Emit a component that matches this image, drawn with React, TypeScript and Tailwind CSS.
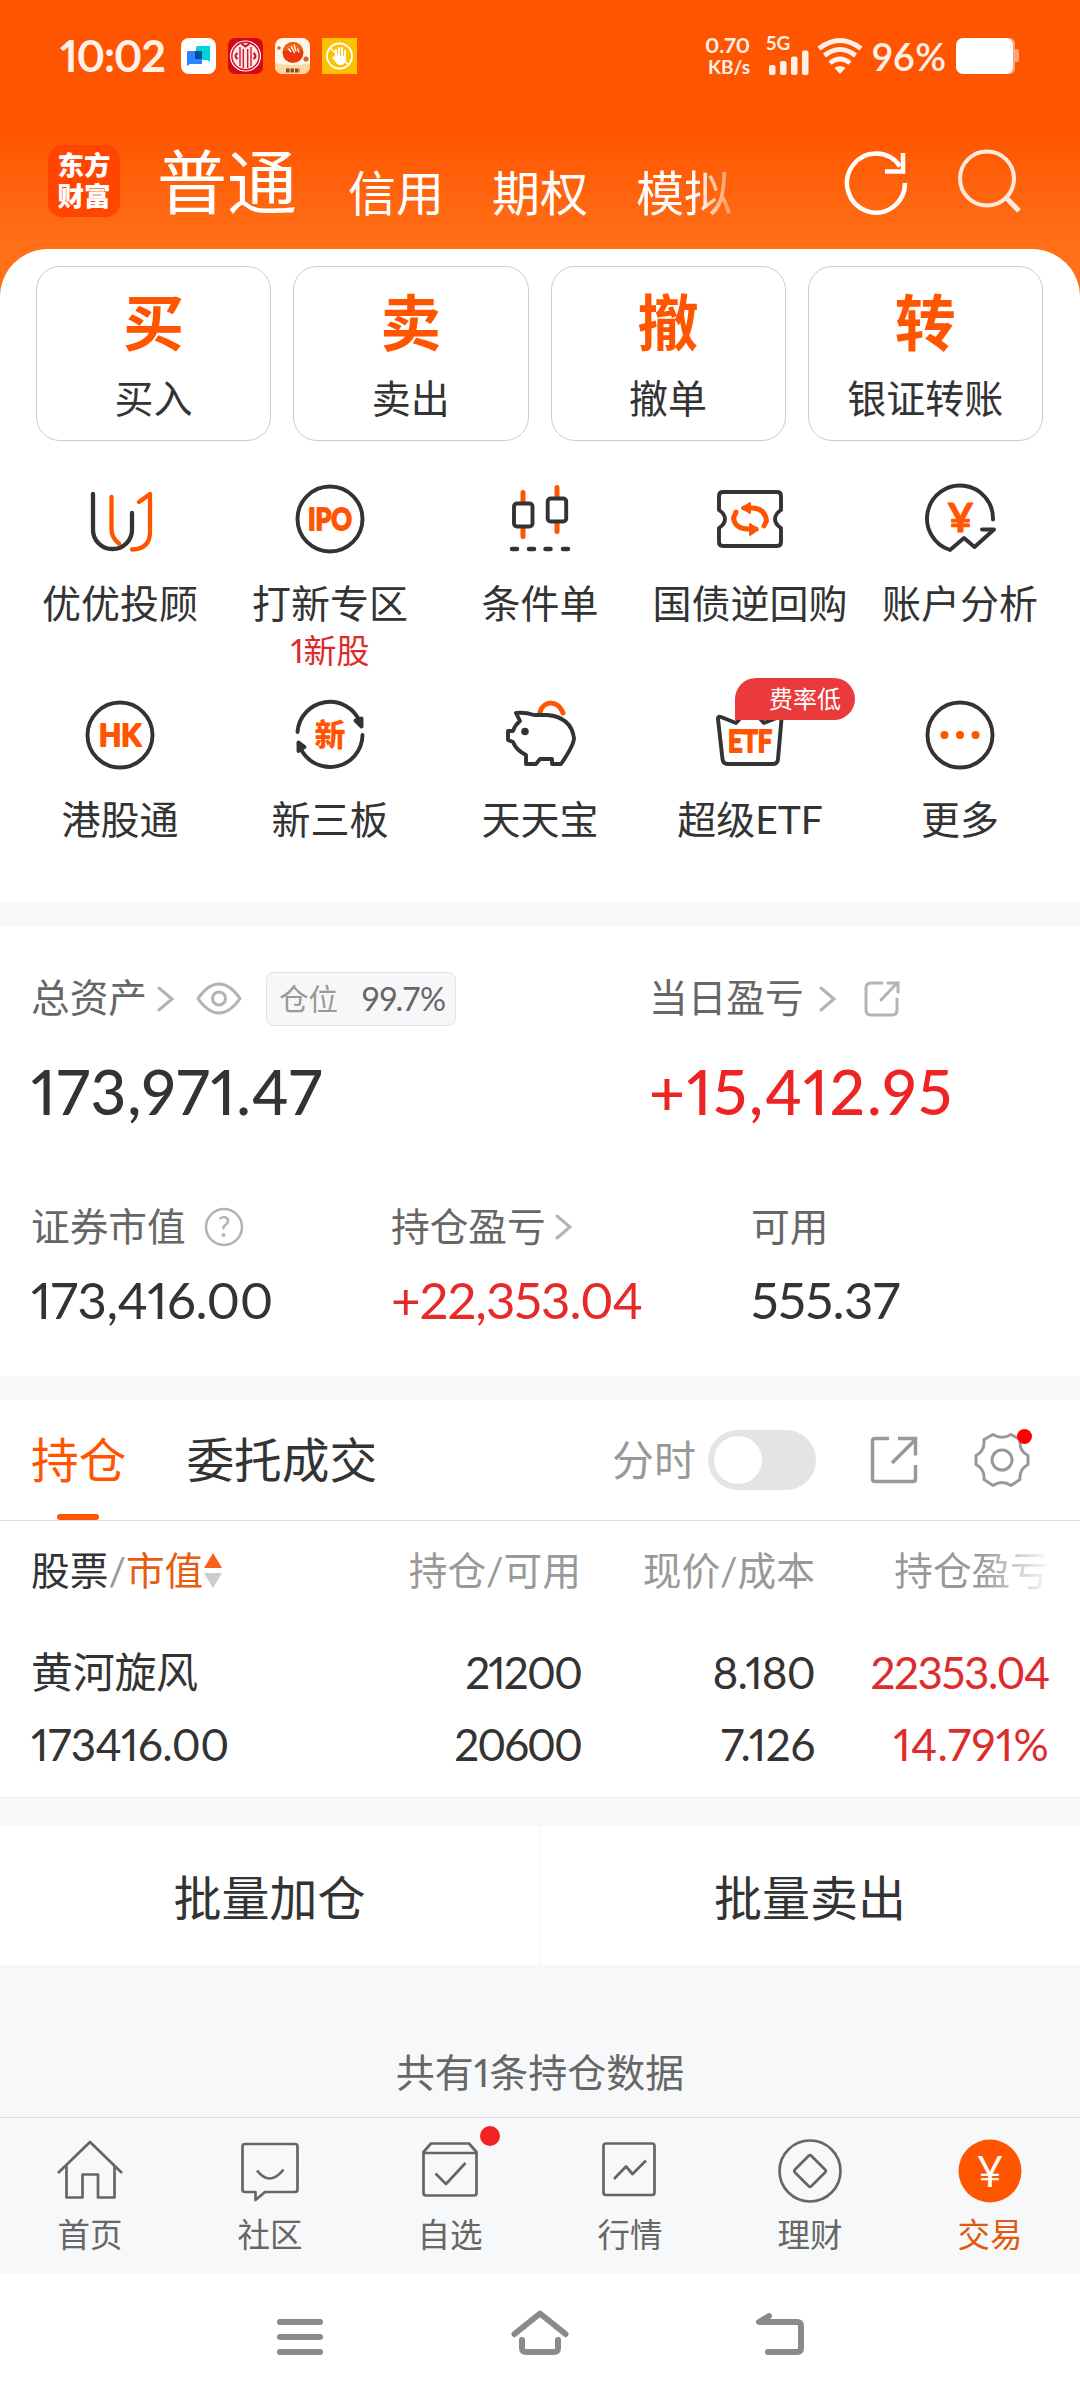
import type { ReactNode } from 'react';

const DARK = '#333333';
const ORANGE = '#ff5500';

function Chevron({ className = '' }: { className?: string }) {
  return (
    <svg width="18" height="28" viewBox="0 0 18 28" fill="none" stroke="#b3b3b3" strokeWidth="3" strokeLinecap="round" className={className}>
      <path d="M2 3 L15 14 L2 25" />
    </svg>
  );
}

function StatusBar() {
  return (
    <div className="flex h-[112px] items-center pl-[60px] pr-[60px] text-[#fff0e8]">
      <span className="w-[121px] text-[43px] leading-[52px] font-bold tracking-[-1.2px]">10:02</span>
      <div className="flex gap-[12px]">
        <svg width="35" height="36" viewBox="0 0 35 36">
          <rect width="35" height="36" rx="8" fill="#fff" />
          <path d="M15 9.5Q15 8 16.5 8H29v16l-2.500-2H15z" fill="#00d4d8" />
          <path d="M6 14Q6 13 7.500 13H21v13H9l-3 2z" fill="#2a86ff" />
          <path d="M14 13h7v8h-7z" fill="#004c99" />
        </svg>
        <svg width="35" height="36" viewBox="0 0 35 36" fill="none" stroke="#fff">
          <rect width="35" height="36" rx="7" fill="#cf0a1c" stroke="none" />
          <circle cx="17.500" cy="18" r="15" strokeWidth="1.200" />
          <circle cx="17.500" cy="18" r="13" fill="#fbe3e6" stroke="none" />
          <path d="M12 9v19M15.300 11v19M19.700 11v19M23 9v19" stroke="#cf0a1c" strokeWidth="1.300" />
          <path d="M13.500 5.500l4 3 4-3" stroke="#cf0a1c" strokeWidth="2" />
          <path d="M9.500 15q-4 3 0 6M25.500 15q4 3 0 6" stroke="#cf0a1c" strokeWidth="2" />
        </svg>
        <svg width="35" height="36" viewBox="0 0 35 36">
          <rect width="35" height="36" rx="8" fill="#fff6ea" />
          <path d="M0 25Q17 29 35 25v3q0 8-8 8H8q-8 0-8-8z" fill="#fbd9a4" />
          <circle cx="18" cy="14.500" r="10.500" fill="#e9380c" />
          <path d="M18 4a10.500 10.500 0 0 1 10 8Q20 12 8 12.500A10.500 10.500 0 0 1 18 4z" fill="#f0650f" />
          <path d="M13.500 10.500l2.500 3.500M16 8l3.500 7M19 6.500l2 7M22.500 10.500l1.500 4" stroke="#fff" strokeWidth="1.300" />
          <circle cx="4" cy="10" r="1.800" fill="#d9622c" />
          <circle cx="31" cy="21" r="2.600" fill="#d9622c" />
          <path d="M11 32.500h14" stroke="#8a4a22" strokeWidth="4" strokeDasharray="3.500 1" />
        </svg>
        <svg width="35" height="36" viewBox="0 0 35 36" fill="none" stroke="#fff" strokeLinecap="round">
          <rect width="35" height="36" fill="#fcc203" stroke="none" />
          <circle cx="17.500" cy="18" r="12.500" strokeWidth="1.800" />
          <path d="M14 19v-7M17 18v-8M20 18v-8M23 20v-7" strokeWidth="2.100" />
          <path d="M12.500 18h11.500v4q-1 5-5.500 5-3.500 0-5-3l-3.500-4.500z" fill="#fff" stroke="none" />
          <path d="M8 10l19 17" strokeWidth="1.500" />
        </svg>
      </div>
      <div className="ml-auto flex items-center">
        <div className="w-[56px] pr-[11px] text-right font-bold whitespace-nowrap">
          <div className="text-[21.500px] leading-[21.500px]">0.70</div>
          <div className="text-[19px] leading-[20px]">KB/s</div>
        </div>
        <div className="mr-[6px] w-[50px]">
          <div className="-mt-[4px] h-[17px] pl-[5px] text-[19px] leading-[19px] font-bold">5G</div>
          <svg width="50" height="25" viewBox="0 0 50 25" fill="#fff0e8">
            <rect x="8" y="15" width="6.500" height="10" rx="2" />
            <rect x="19" y="11" width="6.500" height="14" rx="2" />
            <rect x="30" y="6.500" width="6.500" height="18.500" rx="2" />
            <rect x="41" y="0.500" width="6.500" height="24.500" rx="2" />
          </svg>
        </div>
        <svg width="46" height="38" viewBox="0 0 46 38" fill="none" stroke="#fff0e8" strokeWidth="4.800" className="mr-[9px]">
          <path d="M2 11.500Q23-4.500 44 11.500" />
          <path d="M7.500 18.500Q23 6.500 38.500 18.500" />
          <path d="M13 26Q23 18 33 26" />
          <path d="M17.500 31Q23 27 28.500 31L23 37z" fill="#fff0e8" stroke="none" />
        </svg>
        <span className="w-[84px] text-[38px] leading-[46px] font-semibold tracking-[0.4px]">96%</span>
        <svg width="64" height="38" viewBox="0 0 64 38">
          <path d="M50 1h3q6 0 6 6v5h2q2 0 2 2v9q0 2-2 2h-2v6q0 6-6 6h-3z" fill="#ffa27a" />
          <rect x="0" y="1" width="57" height="36" rx="7" fill="#fff" />
        </svg>
      </div>
    </div>
  );
}

function TitleBar() {
  return (
    <div className="flex h-[137px] items-center pl-[48px] text-white">
      <div className="flex h-[72px] w-[72px] flex-col items-center justify-center rounded-[14px] bg-[#ff4500] text-[26.500px] leading-[31px] font-black">
        <span>东方</span>
        <span>财富</span>
      </div>
      <span className="mt-[2px] ml-[37px] text-[70px] leading-[80px]">普通</span>
      <div className="mt-[24px] ml-[51px] flex gap-[48px] text-[48px] leading-[56px]">
        <span>信用</span>
        <span>期权</span>
        <span className="[mask-image:linear-gradient(to_right,black_62%,rgba(0,0,0,0.4)_95%)]">模拟</span>
      </div>
      <svg width="64" height="68" viewBox="0 0 64 68" fill="none" stroke="#fff" strokeWidth="4.500" className="ml-[112px]">
        <path d="M61 36A29 29.500 0 1 1 56 19.500" />
        <path d="M59 6v18.500H41" />
      </svg>
      <svg width="66" height="68" viewBox="0 0 66 68" fill="none" stroke="#ffe8dc" strokeWidth="4" className="ml-[50px]">
        <circle cx="29" cy="31.500" r="27" />
        <path d="M48 50.500L61 64" strokeWidth="5" />
      </svg>
    </div>
  );
}

const trades = [
  { mark: '买', label: '买入' },
  { mark: '卖', label: '卖出' },
  { mark: '撤', label: '撤单' },
  { mark: '转', label: '银证转账' },
];

function MenuSvg({ children }: { children: ReactNode }) {
  return (
    <svg width="72" height="72" viewBox="0 0 72 72" fill="none" stroke={DARK} strokeWidth="3.900" strokeLinecap="round" strokeLinejoin="round">
      {children}
    </svg>
  );
}

const shortcuts = [
  {
    label: '优优投顾',
    icon: (
      <MenuSvg>
        <path d="M9 11v36a19.500 19 0 0 0 39 0V30" strokeWidth="4.300" />
        <path d="M27.500 14v32q0 9 7.500 14.500M55 19l11-8v38q0 17-18 17.500" stroke={ORANGE} strokeWidth="4.300" />
      </MenuSvg>
    ),
  },
  {
    label: '打新专区',
    note: '1新股',
    icon: (
      <MenuSvg>
        <circle cx="36" cy="36" r="32.500" />
        <text x="36" y="47" textAnchor="middle" fontSize="31" fontWeight="700" fill={ORANGE} stroke={ORANGE} strokeWidth="2" textLength="44" lengthAdjust="spacingAndGlyphs">IPO</text>
      </MenuSvg>
    ),
  },
  {
    label: '条件单',
    icon: (
      <MenuSvg>
        <path d="M19 9.500v44M53 4.500v44" stroke={ORANGE} strokeWidth="5" />
        <rect x="10" y="20.500" width="18.500" height="23" rx="3" fill="#fff" />
        <rect x="43.700" y="15.500" width="18.500" height="23" rx="3" fill="#fff" />
        <path d="M8 66h5M25 66h5M41.500 66h5M59 66h5" strokeWidth="4.500" />
      </MenuSvg>
    ),
  },
  {
    label: '国债逆回购',
    icon: (
      <MenuSvg>
        <path d="M9 9h54q4 0 4 4v14q-6 4-6 9t6 9v14q0 4-4 4H9q-4 0-4-4V45q6-4 6-9t-6-9V13q0-4 4-4z" />
        <path d="M30 25h8q13 0 14.500 13l-2.500 5M42 46h-8q-13 0-14.500-11l2.500-6" stroke={ORANGE} strokeWidth="5" />
        <path d="M28 25l8-5v10zM44 46.500l-8-5.500v11z" fill={ORANGE} stroke={ORANGE} strokeWidth="2" />
      </MenuSvg>
    ),
  },
  {
    label: '账户分析',
    icon: (
      <MenuSvg>
        <path d="M69 36.500A33 33 0 1 0 26 67l14-12 10.500 9L70 46.500H58" />
        <text x="36.500" y="49" textAnchor="middle" fontSize="40" fontWeight="700" fill={ORANGE} stroke={ORANGE} strokeWidth="1">¥</text>
      </MenuSvg>
    ),
  },
  {
    label: '港股通',
    icon: (
      <MenuSvg>
        <circle cx="36" cy="36" r="32.500" />
        <text x="36" y="47" textAnchor="middle" fontSize="31" fontWeight="700" fill={ORANGE} stroke={ORANGE} strokeWidth="2" textLength="42" lengthAdjust="spacingAndGlyphs">HK</text>
      </MenuSvg>
    ),
  },
  {
    label: '新三板',
    icon: (
      <MenuSvg>
        <path d="M3.500 33A32.500 32.500 0 0 1 66 23M68.500 36A32.500 32.500 0 0 1 6 48" />
        <path d="M67.500 19.500v8l-6-6zM4.500 43.500v8.500l6-4z" fill={DARK} />
        <text x="36" y="47" textAnchor="middle" fontSize="31" fontWeight="900" fill={ORANGE} stroke="none">新</text>
      </MenuSvg>
    ),
  },
  {
    label: '天天宝',
    icon: (
      <MenuSvg>
        <path d="M36 13C40 1 54 1 59 14" stroke={ORANGE} strokeWidth="5" />
        <path d="M16 22l-4-8q9-1 18 2h13q24 2 27 23 0 7-13 26H48v-5H36l-4 5H22V56Q12 51 9 43l-5-2V32h5q2-6 7-10z" fill="#fff" />
        <circle cx="21" cy="32.500" r="3.800" fill={DARK} stroke="none" />
      </MenuSvg>
    ),
  },
  {
    label: '超级ETF',
    badge: '费率低',
    icon: (
      <MenuSvg>
        <path d="M4 20q-.500-3 3-2l15 6 14-15 14 15 15-6q3-1 2.500 2L64 60q-.500 5-5 5H14q-5 0-5.500-5z" />
        <text x="36" y="53" textAnchor="middle" fontSize="31" fontWeight="700" fill={ORANGE} stroke={ORANGE} strokeWidth="2" textLength="44" lengthAdjust="spacingAndGlyphs">ETF</text>
      </MenuSvg>
    ),
  },
  {
    label: '更多',
    icon: (
      <MenuSvg>
        <circle cx="36" cy="36" r="32.500" />
        <g fill={ORANGE} stroke="none">
          <circle cx="20.500" cy="36" r="4" />
          <circle cx="36" cy="36" r="4" />
          <circle cx="51.500" cy="36" r="4" />
        </g>
      </MenuSvg>
    ),
  },
];

function Shortcuts() {
  return (
    <div className="mt-[42px] grid h-[420px] grid-cols-5 grid-rows-[216px_204px] px-[15px]">
      {shortcuts.map((s) => (
        <div key={s.label} className="relative flex flex-col items-center">
          {s.icon}
          <span className="mt-[24px] text-[39px] leading-[48px] whitespace-nowrap">{s.label}</span>
          {s.note && <span className="mt-[6px] text-[33px] leading-[35px] text-[#dc2a2a]">{s.note}</span>}
          {s.badge && (
            <span className="absolute top-[-21px] left-[90px] h-[42px] w-[120px] rounded-[21px] rounded-bl-none bg-[#ea3a3c] pl-[34px] text-[24px] leading-[41px] text-white">
              {s.badge}
            </span>
          )}
        </div>
      ))}
    </div>
  );
}

function Assets() {
  return (
    <section className="h-[449px] px-[31px] pt-[45px] text-[38.700px] text-[#666]">
      <div className="flex">
        <div className="w-[618px]">
          <div className="flex h-[54px] items-center">
            <span className="-mt-[3px]">总资产</span>
            <Chevron className="ml-[10px]" />
            <svg width="46" height="34" viewBox="0 0 46 34" fill="none" stroke="#b3b3b3" strokeWidth="3" className="ml-[21px]">
              <path d="M2 16.500Q12 2 23 2t21 14.500Q34 31 23 31T2 16.500z" strokeLinejoin="round" />
              <circle cx="23" cy="16.500" r="6.500" />
            </svg>
            <div className="ml-[24px] flex h-[54px] w-[190px] items-center justify-between rounded-[8px] border border-[#e2e2e5] bg-[#f7f7fa] pr-[9px] pl-[12px]">
              <span className="text-[29.500px] text-[#999]">仓位</span>
              <span className="text-[32.500px]">99.7%</span>
            </div>
          </div>
          <div className="mt-[35px] text-[62px] leading-[60px] font-medium tracking-[0.9px] text-[#333]">173,971.47</div>
        </div>
        <div>
          <div className="flex h-[54px] items-center">
            <span className="-mt-[3px]">当日盈亏</span>
            <Chevron className="ml-[15px]" />
            <svg width="36" height="36" viewBox="0 0 36 36" fill="none" stroke="#b3b3b3" strokeWidth="3" strokeLinecap="round" className="ml-[27px]">
              <path d="M18 2H7Q2 2 2 7v22q0 5 5 5h21q5 0 5-5V18M17 19L33 2M24 2h10v9" />
            </svg>
          </div>
          <div className="mt-[35px] text-[62px] leading-[60px] font-medium tracking-[1.8px] text-[#ee2424]">+15,412.95</div>
        </div>
      </div>
      <div className="mt-[82px] flex">
        <div className="w-[360px]">
          <div className="flex h-[48px] items-center">
            <span className="-mt-[2px]">证券市值</span>
            <svg width="40" height="40" viewBox="0 0 40 40" className="ml-[18px]">
              <circle cx="20" cy="20" r="18" fill="none" stroke="#b3b3b3" strokeWidth="2.500" />
              <text x="20" y="29.500" textAnchor="middle" fontSize="28" fontWeight="500" fill="#b3b3b3">?</text>
            </svg>
          </div>
          <div className="mt-[19px] text-[51px] leading-[60px] tracking-[-0.4px] text-[#333]">173,416.00</div>
        </div>
        <div className="w-[360px]">
          <div className="flex h-[48px] items-center">
            <span className="-mt-[2px]">持仓盈亏</span>
            <Chevron className="ml-[9px]" />
          </div>
          <div className="mt-[19px] text-[51px] leading-[60px] tracking-[-1px] text-[#e62a2a]">+22,353.04</div>
        </div>
        <div>
          <div className="flex h-[48px] items-center">
            <span className="-mt-[2px]">可用</span>
          </div>
          <div className="mt-[19px] text-[51px] leading-[60px] tracking-[-0.5px] text-[#333]">555.37</div>
        </div>
      </div>
    </section>
  );
}

function PositionTabs() {
  return (
    <div className="flex h-[121px] items-center border-b border-[#dcdcde] pl-[31px] text-[47.700px] leading-[60px]">
      <div className="relative flex h-[120px] items-center text-[#ff5500]">
        持仓
        <span className="absolute bottom-0 left-[26px] h-[6px] w-[42px] rounded-full bg-[#ff5500]" />
      </div>
      <span className="ml-[60px]">委托成交</span>
      <span className="ml-auto text-[42px] text-[#999]">分时</span>
      <div className="ml-[12px] h-[60px] w-[108px] rounded-full bg-[#e4e4e6] p-[6px]">
        <div className="h-[48px] w-[48px] rounded-full bg-white" />
      </div>
      <svg width="48" height="48" viewBox="0 0 48 48" fill="none" stroke="#999" strokeWidth="3.500" className="ml-[54px]">
        <path d="M19 2.500H5Q2.500 2.500 2.500 5v38q0 2.500 2.500 2.500h38q2.500 0 2.500-2.500V29M22 27L45 4M28 2.500h17.500v17" />
      </svg>
      <div className="relative mr-[50px] ml-[56px]">
        <svg width="56" height="56" viewBox="0 0 56 56" fill="none" stroke="#999" strokeWidth="3" strokeLinejoin="round">
          <path d="M19 2.500Q28 8 37 2.500l9 5q-1 12 8 16v9q-9 5-8 15l-9 6q-9-6-18 0l-9-6q1-10-8-15v-9q9-4 8-16z" />
          <circle cx="28" cy="28" r="10" />
        </svg>
        <span className="absolute top-[-3px] right-[-2px] h-[15px] w-[15px] rounded-full bg-[#ff0000]" />
      </div>
    </div>
  );
}

function Positions() {
  return (
    <section className="h-[277px] border-b border-[#ececef] text-[44px]">
      <div className="grid h-[98px] grid-cols-[310px_240px_234px_234px] items-center pl-[31px] text-right text-[38.700px] text-[#999]">
        <div className="flex items-center text-[#333]">
          股票<span className="text-[#999]">/</span>
          <span className="text-[#e85c10]">市值</span>
          <svg width="18" height="36" viewBox="0 0 18 36" className="mt-[2px] ml-[1px]">
            <path d="M9 0l9 15H0z" fill="#f8601a" />
            <path d="M0 20h18L9 35z" fill="#ccc" />
          </svg>
        </div>
        <span>持仓/可用</span>
        <span>现价/成本</span>
        <span className="[mask-image:linear-gradient(to_right,black_70%,transparent_102%)]">持仓盈亏</span>
      </div>
      <div className="grid grid-cols-[310px_240px_234px_234px] pt-[17px] pl-[31px] text-right leading-[72px] tracking-[-1.4px]">
        <span className="text-left text-[42px] tracking-[-0.3px]">黄河旋风</span>
        <span className="tracking-[-1.9px]">21200</span>
        <span className="tracking-[-0.8px]">8.180</span>
        <span className="text-[#dd2c2c]">22353.04</span>
        <span className="text-left tracking-[-0.5px]">173416.00</span>
        <span className="tracking-[-2px]">20600</span>
        <span className="tracking-[-0.3px]">7.126</span>
        <span className="tracking-[0.3px] text-[#dd2c2c]">14.791%</span>
      </div>
    </section>
  );
}

function TabSvg({ children }: { children: ReactNode }) {
  return (
    <svg width="66" height="66" viewBox="0 0 66 66" fill="none" stroke="#666" strokeWidth="2.700" strokeLinejoin="round">
      {children}
    </svg>
  );
}

const tabs = [
  { label: '首页', icon: <TabSvg><path d="M1 35L33 4l32 31M9.500 28v31.500H25.500V36.500H41v23h16.500V28" /></TabSvg> },
  { label: '社区', icon: <TabSvg><path d="M8 6h50q2.500 0 2.500 2.500v43q0 2.500-2.500 2.500H28l-9.500 8v-8H8q-2.500 0-2.500-2.500v-43Q5.500 6 8 6zM20 32.500q13 16.500 26.500-1" /></TabSvg> },
  { label: '自选', dot: true, icon: <TabSvg><path d="M6.500 14L14 5.500h38l7.500 8.500v41q0 2.500-2.500 2.500H9q-2.500 0-2.500-2.500zM6.500 15h53M18.500 35.500L29 46l19.500-21" /></TabSvg> },
  { label: '行情', icon: <TabSvg><rect x="6.500" y="5.500" width="51" height="51.500" rx="2.500" /><path d="M17 41l12-12.500 6.500 7.500L49 22.500" /></TabSvg> },
  { label: '理财', icon: <TabSvg><circle cx="33" cy="33" r="30.500" /><path d="M31.500 18L18 31.500q-1.500 1.500 0 3L31.500 48q1.500 1.500 3 0L48 34.500q1.500-1.500 0-3L34.500 18q-1.500-1.500-3 0z" /></TabSvg> },
  {
    label: '交易',
    active: true,
    icon: (
      <TabSvg>
        <circle cx="33" cy="33" r="31.500" fill={ORANGE} stroke="none" />
        <text x="33" y="49" textAnchor="middle" fontSize="42" fill="#fff" stroke="none" textLength="27" lengthAdjust="spacingAndGlyphs">¥</text>
      </TabSvg>
    ),
  },
];

function TabBar() {
  return (
    <nav className="grid h-[157px] grid-cols-6 border-t border-[#e0e0e2] pt-[20px]">
      {tabs.map((t) => (
        <div key={t.label} className={t.active ? 'relative flex flex-col items-center text-[#e0590f]' : 'relative flex flex-col items-center text-[#666]'}>
          {t.icon}
          <span className="mt-[11px] text-[32.500px] leading-[40px]">{t.label}</span>
          {t.dot && <span className="absolute top-[-12px] left-[120px] h-[20px] w-[20px] rounded-full bg-[#f22222]" />}
        </div>
      ))}
    </nav>
  );
}

function SystemNav() {
  return (
    <div className="flex h-[126px] items-center justify-center gap-[180px] bg-white">
      <svg width="60" height="60" viewBox="0 0 60 60" fill="none" stroke="#8a8a8a" strokeWidth="6" strokeLinecap="round">
        <path d="M10 15h40M10 30h40M10 45h40" />
      </svg>
      <svg width="60" height="60" viewBox="0 0 60 60" fill="none" stroke="#8a8a8a" strokeWidth="6" strokeLinecap="round" strokeLinejoin="round">
        <path d="M4.500 27L30 6.500 55.500 27M12 33v8q0 4 4 4h28q4 0 4-4v-8" />
      </svg>
      <svg width="60" height="60" viewBox="0 0 60 60" fill="none" stroke="#8a8a8a" strokeWidth="6" strokeLinecap="round" strokeLinejoin="round">
        <path d="M19 9L9 15h38q4 0 4 4v22q0 4-4 4H18" />
      </svg>
    </div>
  );
}

export default function App() {
  return (
    <div className="h-[2400px] w-[1080px] overflow-hidden bg-[#f7f8fa] bg-[linear-gradient(to_bottom,#ff5500_0px,#ff5500_130px,#ff7019_249px,#ff7019_320px,transparent_320px)] font-['Lato','Noto_Sans_CJK_SC',sans-serif] text-[#333] proportional-nums">
      <StatusBar />
      <TitleBar />
      <div className="h-[654px] rounded-t-[48px] bg-white pt-[17px]">
        <div className="grid grid-cols-4 gap-[22px] pr-[37px] pl-[36px]">
          {trades.map((t) => (
            <div key={t.label} className="flex h-[175px] flex-col items-center rounded-[24px] border border-[#ccc] pt-[24px]">
              <span className="text-[61px] leading-[64px] font-bold text-[#ff5500]">{t.mark}</span>
              <span className="mt-[19px] text-[39px] leading-[48px]">{t.label}</span>
            </div>
          ))}
        </div>
        <Shortcuts />
      </div>
      <div className="mt-[24px] bg-white">
        <Assets />
      </div>
      <div className="mt-[24px] bg-white">
        <PositionTabs />
        <Positions />
      </div>
      <div className="mt-[28px] grid h-[139px] grid-cols-2 bg-white text-center text-[48px] leading-[143px]">
        <span className="border-r border-[#f5f5f7]">批量加仓</span>
        <span>批量卖出</span>
      </div>
      <div className="h-[152px] pt-[77px] text-center text-[39px] leading-[60px] text-[#666]">共有1条持仓数据</div>
      <TabBar />
      <SystemNav />
    </div>
  );
}
